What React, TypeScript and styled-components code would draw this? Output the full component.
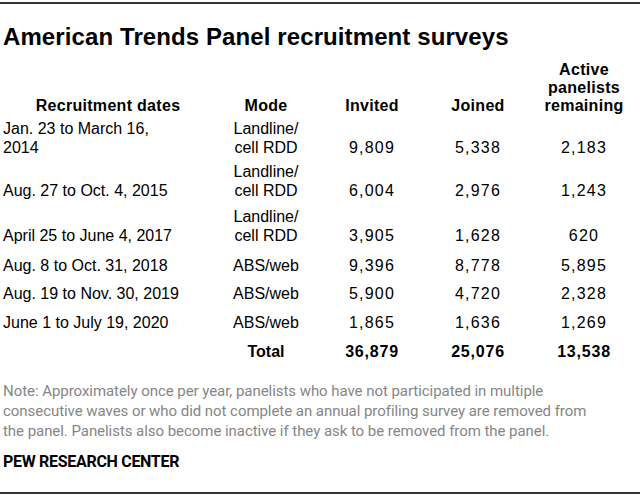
import * as React from 'react';
import styled, { createGlobalStyle } from 'styled-components';

const GlobalStyle = createGlobalStyle`
  html, body {
    margin: 0;
    padding: 0;
    background: #fff;
  }
  body {
    font-family: "Liberation Sans", Arial, sans-serif;
    color: #000;
  }
`;

const Frame = styled.div`
  width: 640px;
  box-sizing: border-box;
  padding: 2px 3px 0;
`;

const Rule = styled.div<{ $gap?: number }>`
  height: 2px;
  background: #333;
  margin: ${(p) => p.$gap ?? 0}px -3px 0;
`;

const Title = styled.h1`
  margin: 19px 0 0;
  font-size: 24px;
  line-height: 28px;
  font-weight: 700;
  letter-spacing: 0.1px;
`;

const Table = styled.div`
  display: flex;
  flex-direction: column;
  margin-top: 6px;
`;

const Row = styled.div<{ $h: number }>`
  display: grid;
  grid-template-columns: 210px repeat(4, 106px);
  align-items: end;
  height: ${(p) => p.$h}px;
`;

const Cell = styled.div<{ $align?: 'left' | 'center'; $bold?: boolean; $num?: boolean }>`
  text-align: ${(p) => p.$align ?? 'center'};
  font-size: 16px;
  line-height: 19px;
  font-weight: ${(p) => (p.$bold ? 700 : 400)};
  letter-spacing: ${(p) => (p.$num ? (p.$bold ? '0.8px' : '1.2px') : '0')};
  padding-bottom: 4px;
`;

const HeadCell = styled.div`
  text-align: center;
  font-size: 16px;
  line-height: 18px;
  font-weight: 700;
  letter-spacing: 0.3px;
  padding-bottom: 4px;
`;

const Note = styled.div`
  margin-top: 16px;
  font-family: "Roboto", "Liberation Sans", sans-serif;
  font-size: 15px;
  line-height: 20px;
  color: #868686;
  letter-spacing: -0.05px;
  white-space: nowrap;
`;

const Source = styled.div`
  margin-top: 11px;
  font-family: "Roboto", "Liberation Sans", sans-serif;
  font-weight: 700;
  font-size: 16px;
  line-height: 20px;
  letter-spacing: -0.3px;
`;

type Survey = {
  dates: React.ReactNode;
  mode: React.ReactNode;
  invited: string;
  joined: string;
  active: string;
  h: number;
};

const surveys: Survey[] = [
  { dates: <>Jan. 23 to March 16,<br />2014</>, mode: <>Landline/<br />cell RDD</>, invited: '9,809', joined: '5,338', active: '2,183', h: 40 },
  { dates: 'Aug. 27 to Oct. 4, 2015', mode: <>Landline/<br />cell RDD</>, invited: '6,004', joined: '2,976', active: '1,243', h: 45 },
  { dates: 'April 25 to June 4, 2017', mode: <>Landline/<br />cell RDD</>, invited: '3,905', joined: '1,628', active: '620', h: 45 },
  { dates: 'Aug. 8 to Oct. 31, 2018', mode: 'ABS/web', invited: '9,396', joined: '8,778', active: '5,895', h: 30 },
  { dates: 'Aug. 19 to Nov. 30, 2019', mode: 'ABS/web', invited: '5,900', joined: '4,720', active: '2,328', h: 28 },
  { dates: 'June 1 to July 19, 2020', mode: 'ABS/web', invited: '1,865', joined: '1,636', active: '1,269', h: 29 },
];

export default function App() {
  return (
    <Frame>
      <GlobalStyle />
      <Rule />
      <Title>American Trends Panel recruitment surveys</Title>
      <Table>
        <Row $h={62}>
          <HeadCell>Recruitment dates</HeadCell>
          <HeadCell>Mode</HeadCell>
          <HeadCell>Invited</HeadCell>
          <HeadCell>Joined</HeadCell>
          <HeadCell>Active<br />panelists<br />remaining</HeadCell>
        </Row>
        {surveys.map((s, i) => (
          <Row key={i} $h={s.h}>
            <Cell $align="left">{s.dates}</Cell>
            <Cell>{s.mode}</Cell>
            <Cell $num>{s.invited}</Cell>
            <Cell $num>{s.joined}</Cell>
            <Cell $num>{s.active}</Cell>
          </Row>
        ))}
        <Row $h={29}>
          <span />
          <Cell $bold>Total</Cell>
          <Cell $bold $num>36,879</Cell>
          <Cell $bold $num>25,076</Cell>
          <Cell $bold $num>13,538</Cell>
        </Row>
      </Table>
      <Note>
        Note: Approximately once per year, panelists who have not participated in multiple
        <br />
        consecutive waves or who did not complete an annual profiling survey are removed from
        <br />
        the panel. Panelists also become inactive if they ask to be removed from the panel.
      </Note>
      <Source>PEW RESEARCH CENTER</Source>
      <Rule $gap={20} />
    </Frame>
  );
}
